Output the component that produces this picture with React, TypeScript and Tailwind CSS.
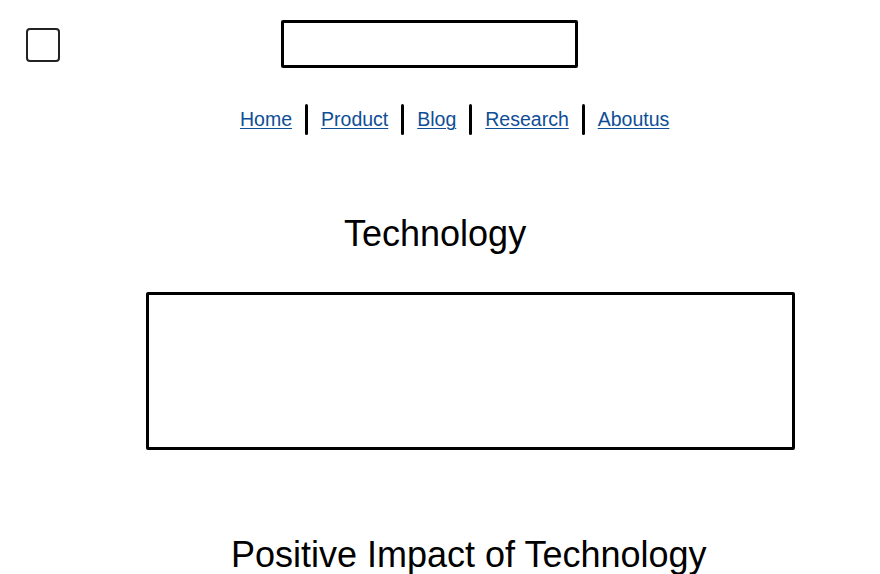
import React from "react";

const links = ["Home", "Product", "Blog", "Research", "Aboutus"];

export default function App() {
  return (
    <div className="w-[880px] h-[574px] overflow-hidden bg-white text-black font-['Liberation_Sans',Arial,sans-serif]">
      <div className="flex items-start">
        <div className="ml-[26px] mt-[28px] w-[34px] h-[34px] border-2 border-[#222] rounded-[4px]" />
        <div className="ml-[221px] mt-[20px] w-[297px] h-[48px] border-[3px] border-black rounded-[2px]" />
      </div>
      <nav className="mt-[36px] pl-[240px] flex items-center h-[31px]">
        {links.map((l, i) => (
          <React.Fragment key={l}>
            {i > 0 && <div className="mx-[13px] w-[3px] h-[31px] bg-black rounded-full" />}
            <a href="#" className="text-[19.5px] leading-none text-[#0e4e96] underline underline-offset-2 decoration-1">
              {l}
            </a>
          </React.Fragment>
        ))}
      </nav>
      <h1 className="mt-[81px] pl-[344px] text-[36px] leading-none">Technology</h1>
      <div className="mt-[40px] ml-[146px] w-[649px] h-[158px] border-[3px] border-black rounded-[2px]" />
      <h2 className="mt-[87px] pl-[231px] text-[36px] leading-none whitespace-nowrap">Positive Impact of Technology</h2>
    </div>
  );
}
